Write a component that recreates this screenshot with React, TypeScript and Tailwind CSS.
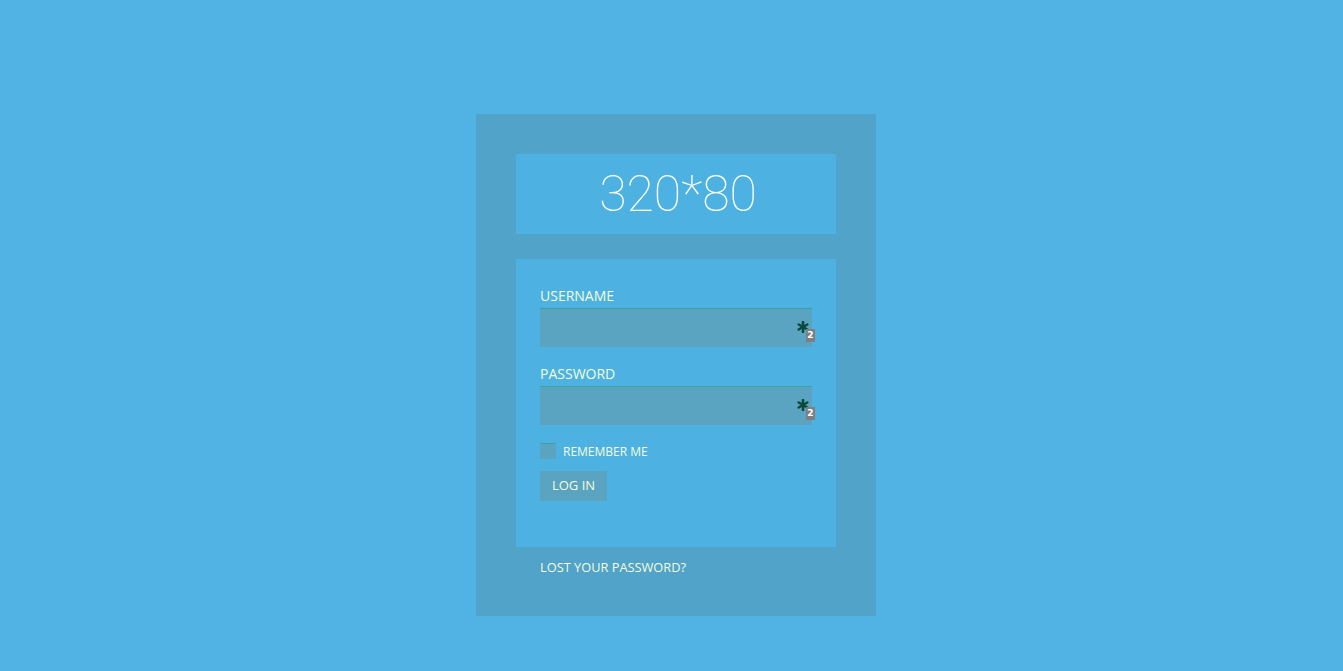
import React from 'react';

function FillBadge() {
  return (
    <div className="pointer-events-none absolute right-[-3px] top-[12px] flex items-start">
      <svg width="12" height="12" viewBox="0 0 12 12" className="mr-[-3px] mt-[1px]">
        <g stroke="#0b4a3a" strokeWidth="2.6" strokeLinecap="round">
          <line x1="6" y1="1" x2="6" y2="11" />
          <line x1="1.7" y1="3.5" x2="10.3" y2="8.5" />
          <line x1="1.7" y1="8.5" x2="10.3" y2="3.5" />
        </g>
      </svg>
      <div className="mt-[9px] flex h-[13px] w-[9px] items-center justify-center bg-[#7f7f7f] text-[9px] font-bold leading-none text-white [font-family:'DejaVu_Sans',sans-serif]">
        2
      </div>
    </div>
  );
}

function Field({ label, type }: { label: string; type: string }) {
  return (
    <div>
      <label className="mb-[2px] block h-5 text-[14px] leading-5 text-[#f4fcd8]">{label}</label>
      <div className="relative w-[272px]">
        <input
          type={type}
          className="block h-[39px] w-full border-0 border-t border-[#3aa29f] bg-[#5aa4c2] px-2 text-white outline-none"
        />
        <FillBadge />
      </div>
    </div>
  );
}

export default function App() {
  return (
    <main className="flex min-h-[671px] w-full items-start justify-center bg-[#51b3e4] pl-[9px] pt-[114px] [font-family:'Open_Sans',sans-serif]">
      <div className="w-[400px] bg-[#51a3c9] px-10 pb-[39px] pt-10">
        <div className="flex h-20 items-center justify-center bg-[#4db2e1]">
          <span className="pl-1 text-[50px] font-thin leading-none text-white [font-family:Roboto,sans-serif]">320*80</span>
        </div>

        <form className="mt-[25px] bg-[#4db2e1] px-6 pb-[46px] pt-[27px]">
          <div className="space-y-[17px]">
            <Field label="USERNAME" type="text" />
            <Field label="PASSWORD" type="password" />
          </div>

          <div className="mt-[17px] flex h-[18px] items-start">
            <span className="mt-[1px] block h-4 w-4 border-t border-[#3aa29f] bg-[#5aa4c2]" />
            <span className="ml-[7px] text-[12px] leading-[20px] text-[#f4fcd8]">REMEMBER ME</span>
          </div>

          <button
            type="button"
            className="mt-[11px] block h-[30px] w-[67px] bg-[#5aa4c2] text-[13px] text-[#f4fcd8]"
          >
            LOG IN
          </button>
        </form>

        <div className="mt-[10px] h-5 px-6 text-[12.8px] leading-5 text-[#f4fcd8]">
          <a>LOST YOUR PASSWORD?</a>
        </div>
      </div>
    </main>
  );
}
